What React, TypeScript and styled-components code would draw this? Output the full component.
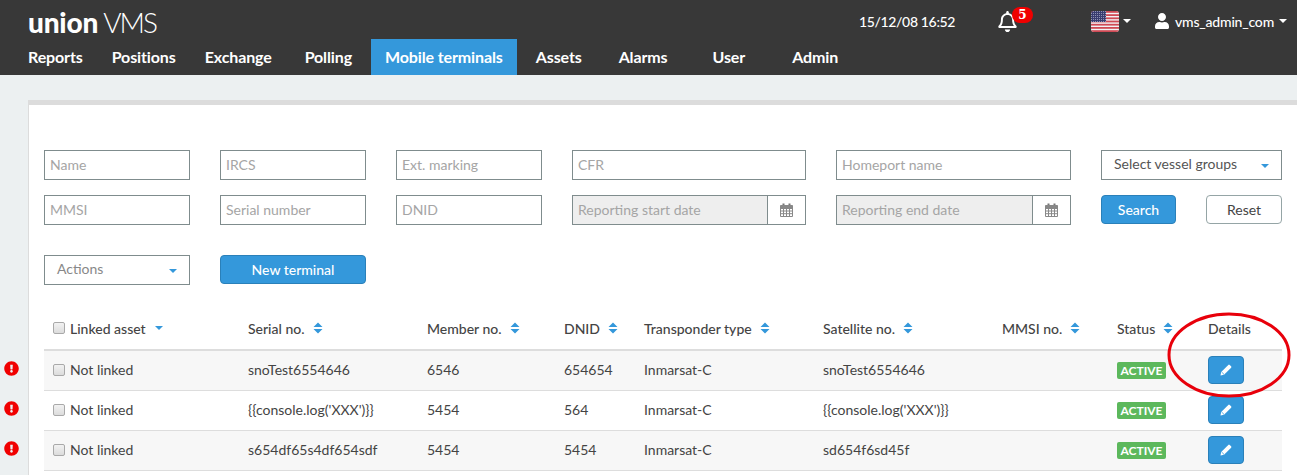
import React, { FC } from 'react';
import styled, { createGlobalStyle } from 'styled-components';
import { FaExclamationCircle, FaRegBell, FaUser } from 'react-icons/fa';

const navItems = ['Reports', 'Positions', 'Exchange', 'Polling', 'Mobile terminals', 'Assets', 'Alarms', 'User', 'Admin'];
const navGaps = [1, 1, 5, 5, 5, 9, 17, 19, 0];

const columns = [
    { title: 'Linked asset', width: 195, sort: 'caret' },
    { title: 'Serial no.', width: 179, sort: 'both' },
    { title: 'Member no.', width: 137, sort: 'both' },
    { title: 'DNID', width: 80, sort: 'both' },
    { title: 'Transponder type', width: 179, sort: 'both' },
    { title: 'Satellite no.', width: 179, sort: 'both' },
    { title: 'MMSI no.', width: 115, sort: 'both' },
    { title: 'Status', width: 91, sort: 'both' },
    { title: 'Details', width: 83, sort: 'none' },
];

const rows = [
    { serial: 'snoTest6554646', member: '6546', dnid: '654654', satellite: 'snoTest6554646' },
    { serial: "{{console.log('XXX')}}", member: '5454', dnid: '564', satellite: "{{console.log('XXX')}}" },
    { serial: 's654df65s4df654sdf', member: '5454', dnid: '5454', satellite: 'sd654f6sd45f' },
];

const SortIcon: FC = () => (
    <svg width="10" height="12" viewBox="0 0 10 12">
        <path d="M5 0.5 L9.5 5 H0.5 Z M0.5 7 H9.5 L5 11.5 Z" fill="#3498db" />
    </svg>
);

const CalendarIcon: FC = () => (
    <svg width="13" height="14" viewBox="0 0 13 14">
        <path d="M2.5 0.5 H4.5 V3 H2.5 Z M8.5 0.5 H10.5 V3 H8.5 Z" fill="#777" />
        <path
            d="M0.5 2.5 H12.5 V13.5 H0.5 Z M0.5 5.5 H12.5 M0.5 8 H12.5 M0.5 10.7 H12.5 M3.5 5.5 V13.5 M6.5 5.5 V13.5 M9.5 5.5 V13.5"
            fill="none"
            stroke="#888"
        />
        <rect x="0.5" y="2.5" width="12" height="2.5" fill="#888" />
    </svg>
);

const PencilIcon: FC = () => (
    <svg width="12" height="12" viewBox="0 0 12 12">
        <path d="M0.5 11.5 L1.2 8 L8.3 0.9 Q9 0.3 9.7 0.9 L11.1 2.3 Q11.7 3 11.1 3.7 L4 10.8 Z" fill="#fff" />
        <path d="M1.6 8 L4 10.4" stroke="#3498db" strokeWidth="0.8" />
    </svg>
);

const Flag: FC = () => (
    <svg width="28" height="21" viewBox="0 0 28 21">
        <defs>
            <pattern id="stars" width="2" height="2" patternUnits="userSpaceOnUse">
                <rect width="2" height="2" fill="#3a3d70" />
                <rect width="1" height="1" fill="#8f92b4" />
            </pattern>
            <clipPath id="flagShape">
                <rect width="28" height="21" rx="3" />
            </clipPath>
        </defs>
        <g clipPath="url(#flagShape)">
            <rect width="28" height="21" fill="#f2f2f4" />
            {[0, 3.2, 6.4, 9.6, 12.8, 16, 19.2].map((y) => (
                <rect key={y} y={y} width="28" height="1.8" fill="#cf4a55" />
            ))}
            <rect width="15" height="11" fill="url(#stars)" />
        </g>
    </svg>
);

const Ring: FC = () => (
    <RingWrap width="126" height="88" viewBox="0 0 126 88">
        <ellipse cx="63" cy="44" rx="60" ry="41" fill="none" stroke="#e8000b" strokeWidth="3" />
    </RingWrap>
);

const App: FC = () => {
    return (
        <Page>
            <GlobalStyle />
            <Header>
                <TopBar>
                    <Logo>
                        <b>union</b> <span>VMS</span>
                    </Logo>
                    <TopRight>
                        <DateText>15/12/08 16:52</DateText>
                        <BellWrap>
                            <FaRegBell size={21} color="#fff" />
                            <Badge>5</Badge>
                        </BellWrap>
                        <FlagWrap>
                            <Flag />
                            <Caret $color="#fff" />
                        </FlagWrap>
                        <UserWrap>
                            <FaUser size={16} color="#fff" />
                            <span>vms_admin_com</span>
                            <Caret $color="#fff" />
                        </UserWrap>
                    </TopRight>
                </TopBar>
                <Nav>
                    {navItems.map((item, i) => (
                        <NavItem key={item} $active={item === 'Mobile terminals'} $gap={navGaps[i]}>
                            {item}
                        </NavItem>
                    ))}
                </Nav>
            </Header>

            <Panel>
                <Filters>
                    <TextInput placeholder="Name" />
                    <TextInput placeholder="IRCS" />
                    <TextInput placeholder="Ext. marking" />
                    <TextInput placeholder="CFR" />
                    <TextInput placeholder="Homeport name" />
                    <Select $dark>
                        Select vessel groups
                        <Caret $color="#3498db" />
                    </Select>

                    <TextInput placeholder="MMSI" />
                    <TextInput placeholder="Serial number" />
                    <TextInput placeholder="DNID" />
                    <DateGroup>
                        <DateInput placeholder="Reporting start date" disabled />
                        <DateAddon>
                            <CalendarIcon />
                        </DateAddon>
                    </DateGroup>
                    <DateGroup>
                        <DateInput placeholder="Reporting end date" disabled />
                        <DateAddon>
                            <CalendarIcon />
                        </DateAddon>
                    </DateGroup>
                    <ButtonRow>
                        <PrimaryButton $width={75}>Search</PrimaryButton>
                        <ResetButton>Reset</ResetButton>
                    </ButtonRow>
                </Filters>

                <ActionsRow>
                    <Select>
                        Actions
                        <Caret $color="#3498db" />
                    </Select>
                    <PrimaryButton $width={146}>New terminal</PrimaryButton>
                </ActionsRow>

                <Table>
                    <thead>
                        <tr>
                            {columns.map((col, i) => (
                                <Th key={col.title} $width={col.width}>
                                    <HeadInner>
                                        {i === 0 && <Check type="checkbox" />}
                                        {col.title}
                                        {col.sort === 'both' && <SortIcon />}
                                        {col.sort === 'caret' && <Caret $color="#3498db" />}
                                    </HeadInner>
                                </Th>
                            ))}
                        </tr>
                    </thead>
                    <tbody>
                        {rows.map((row, i) => (
                            <Row key={i}>
                                <FirstCell>
                                    <Warning>
                                        <FaExclamationCircle size={15} color="#f00000" />
                                    </Warning>
                                    <LinkedCell>
                                        <Check type="checkbox" />
                                        Not linked
                                    </LinkedCell>
                                </FirstCell>
                                <Td>{row.serial}</Td>
                                <Td>{row.member}</Td>
                                <Td>{row.dnid}</Td>
                                <Td>Inmarsat-C</Td>
                                <Td>{row.satellite}</Td>
                                <Td />
                                <Td>
                                    <StatusLabel>ACTIVE</StatusLabel>
                                </Td>
                                <Td>
                                    <EditButton>
                                        <PencilIcon />
                                    </EditButton>
                                </Td>
                            </Row>
                        ))}
                    </tbody>
                </Table>
            </Panel>
            <Ring />
        </Page>
    );
};

export default App;

const GlobalStyle = createGlobalStyle`
    html, body {
        margin: 0;
        height: 100%;
        overflow: hidden;
        background: #ecf0f1;
        font-family: Lato, "Open Sans", sans-serif;
        font-size: 14px;
        color: #444;
    }
    * {
        box-sizing: border-box;
    }
`;

const Page = styled.div`
    position: relative;
    width: 1297px;
    height: 475px;
    overflow: hidden;
`;

const Header = styled.header`
    height: 75px;
    background: #383838;
    color: #fff;
`;

const TopBar = styled.div`
    height: 39px;
    display: flex;
    justify-content: space-between;
    padding: 0 10px 0 28px;
`;

const Logo = styled.div`
    font-size: 28px;
    line-height: 44px;

    b {
        font-weight: 900;
        letter-spacing: -0.2px;
    }

    span {
        margin-left: -2px;
        font-weight: 300;
        letter-spacing: -2px;
    }
`;

const TopRight = styled.div`
    display: flex;
    align-items: center;
    height: 42px;
`;

const DateText = styled.span`
    font-size: 14px;
    font-weight: 500;
    letter-spacing: -0.35px;
    width: 96px;
    white-space: nowrap;
`;

const BellWrap = styled.div`
    position: relative;
    display: flex;
    width: 36px;
    margin-left: 42px;
`;

const Badge = styled.span`
    position: absolute;
    top: -4px;
    right: 0;
    width: 21px;
    height: 16px;
    border-radius: 8px;
    background: #f00000;
    color: #fff;
    font: bold 12px/16px "DejaVu Serif", serif;
    text-align: center;
`;

const FlagWrap = styled.div`
    display: flex;
    align-items: center;
    gap: 4px;
    margin-left: 58px;
`;

const UserWrap = styled.div`
    display: flex;
    align-items: center;
    margin-left: 23px;
    font-size: 14px;
    font-weight: 500;
    letter-spacing: -0.2px;

    span {
        margin: 0 5px;
    }
`;

const Caret = styled.i<{ $color: string }>`
    display: inline-block;
    width: 0;
    height: 0;
    border-top: 4px solid ${(p) => p.$color};
    border-left: 4px solid transparent;
    border-right: 4px solid transparent;
`;

const Nav = styled.nav`
    height: 36px;
    display: flex;
    padding-left: 14px;
`;

const NavItem = styled.a<{ $active?: boolean; $gap: number }>`
    display: flex;
    align-items: center;
    padding: 0 14px 2px;
    margin-right: ${(p) => p.$gap}px;
    font-size: 16px;
    font-weight: 700;
    letter-spacing: -0.12px;
    color: #fff;
    background: ${(p) => (p.$active ? '#3498db' : 'transparent')};
`;

const Panel = styled.main`
    margin: 25px 0 0 28px;
    height: 400px;
    padding: 45px 15px 0;
    background: #fff;
    border-top: 5px solid #dcdcdc;
    border-left: 1px solid #dcdcdc;
`;

const Filters = styled.div`
    display: grid;
    grid-template-columns: 146px 146px 146px 234px 235px 181px;
    grid-auto-rows: 30px;
    column-gap: 30px;
    row-gap: 15px;
`;

const TextInput = styled.input`
    width: 100%;
    height: 30px;
    padding: 0 5px 2px;
    border: 1px solid #7f8c8d;
    border-radius: 0;
    outline: none;
    font: 14px Lato, sans-serif;
    color: #444;

    &::placeholder {
        color: #a5a5a5;
        opacity: 1;
    }
`;

const Select = styled.div<{ $dark?: boolean }>`
    display: flex;
    align-items: center;
    justify-content: space-between;
    height: 30px;
    padding: 0 12px 3px 12px;
    border: 1px solid #7f8c8d;
    color: ${(p) => (p.$dark ? '#555' : '#888')};
    font-size: 14px;
    background: #fff;

    i {
        margin-top: 5px;
    }
`;

const DateGroup = styled.div`
    display: flex;
`;

const DateInput = styled(TextInput)`
    flex: 1;
    min-width: 0;
    background: #eee;
`;

const DateAddon = styled.div`
    flex: 0 0 38px;
    display: flex;
    align-items: center;
    justify-content: center;
    border: 1px solid #7f8c8d;
    border-left: none;
    background: #fff;
`;

const ButtonRow = styled.div`
    display: flex;
    justify-content: space-between;
    align-items: flex-start;
`;

const PrimaryButton = styled.button<{ $width: number }>`
    width: ${(p) => p.$width}px;
    height: 29px;
    padding: 0;
    border: 1px solid #2a80b9;
    border-radius: 4px;
    background: #3498db;
    color: #fff;
    font: 500 14px Lato, sans-serif;
`;

const ResetButton = styled.button`
    width: 76px;
    height: 29px;
    padding: 0;
    border: 1px solid #95a5a6;
    border-radius: 4px;
    background: #fff;
    color: #444;
    font: 14px Lato, sans-serif;
`;

const ActionsRow = styled.div`
    display: grid;
    grid-template-columns: 146px 146px;
    column-gap: 30px;
    margin-top: 30px;
`;

const Table = styled.table`
    width: 1238px;
    margin-top: 30px;
    table-layout: fixed;
    border-collapse: separate;
    border-spacing: 0;
`;

const Th = styled.th<{ $width: number }>`
    width: ${(p) => p.$width}px;
    height: 36px;
    padding: 0 0 8px 9px;
    border-bottom: 2px solid #ddd;
    font-weight: 500;
    text-align: left;
    color: #444;
`;

const HeadInner = styled.div`
    display: flex;
    align-items: center;
    gap: 8px;
    white-space: nowrap;

    input {
        margin-right: -3px;
    }

    i {
        margin-left: 1px;
    }
`;

const Row = styled.tr`
    &:nth-child(odd) td {
        background: #f7f7f7;
    }
`;

const Td = styled.td`
    height: 40px;
    padding: 0 0 2px 9px;
    border-bottom: 1px solid #ddd;
    white-space: nowrap;
    color: #444;
`;

const FirstCell = styled(Td)`
    position: relative;
`;

const LinkedCell = styled.div`
    display: flex;
    align-items: center;
    gap: 5px;
`;

const Warning = styled.span`
    position: absolute;
    top: 10px;
    left: -40px;
    display: flex;
`;

const Check = styled.input`
    appearance: none;
    width: 12px;
    height: 12px;
    margin: 0;
    flex: none;
    border: 1px solid #a9a9a9;
    border-radius: 2px;
    background: linear-gradient(#f2f2f2, #dcdcdc);
`;

const StatusLabel = styled.span`
    display: inline-block;
    width: 49px;
    height: 17px;
    border-radius: 2px;
    background: #5cb85c;
    color: #fff;
    font-size: 12px;
    font-weight: 700;
    line-height: 17px;
    text-align: center;
    vertical-align: middle;
`;

const EditButton = styled.button`
    display: flex;
    align-items: center;
    justify-content: center;
    width: 36px;
    height: 28px;
    padding: 0;
    border: 1px solid #2a80b9;
    border-radius: 4px;
    background: #3498db;
`;

const RingWrap = styled.svg`
    position: absolute;
    top: 311px;
    left: 1166px;
    pointer-events: none;
`;
